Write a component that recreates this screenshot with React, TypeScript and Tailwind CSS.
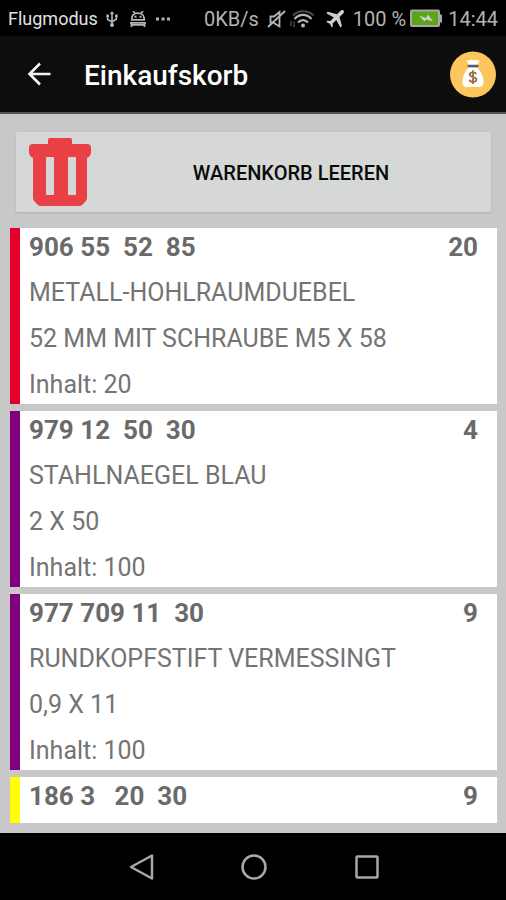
/* Shopping basket screen: status bar, app bar, list of articles, nav keys. */
import { useState } from "react";

interface Item { nr: string; qty: number; lines: string[]; bar: string }

const START: Item[] = [
  { nr: "906 55  52  85", qty: 20, bar: "bg-[#e4002b]",
    lines: ["METALL-HOHLRAUMDUEBEL", "52 MM MIT SCHRAUBE M5 X 58", "Inhalt: 20"] },
  { nr: "979 12  50  30", qty: 4, bar: "bg-[#800080]",
    lines: ["STAHLNAEGEL BLAU", "2 X 50", "Inhalt: 100"] },
  { nr: "977 709 11  30", qty: 9, bar: "bg-[#800080]",
    lines: ["RUNDKOPFSTIFT VERMESSINGT", "0,9 X 11", "Inhalt: 100"] },
  { nr: "186 3   20  30", qty: 9, bar: "bg-[#ffff00]", lines: [] },
];

function StatusBar() {
  return (
    <div className="flex h-9 shrink-0 items-center justify-between bg-black px-2 pt-0.5 text-[#b4b4b4]">
      <div className="flex items-center">
        <span className="text-lg text-[#e0e0e0]">Flugmodus</span>
        <svg className="ml-2 h-4 w-3" viewBox="0 0 12 16" fill="none" stroke="currentColor" strokeWidth="1.6">
          <path d="M6 2v12M1.600 5v3.500L6 11l4.400-3V5" />
          <path d="M6 0l2.200 3H3.800zM.3 3.500h2.600v2.400H.3zM9.100 3.500h2.600v2.400H9.100z" fill="currentColor" stroke="none" />
          <circle cx="6" cy="14" r="2" fill="currentColor" stroke="none" />
        </svg>
        <svg className="ml-3 h-4 w-4" viewBox="0 0 16 16" fill="none" stroke="currentColor" strokeWidth="1.8">
          <path d="M3 0l2 2.500M13 0l-2 2.500M1.800 8C1.800 4 4.500 2.200 8 2.200S14.200 4 14.200 8v.8H1.800z" />
          <path d="M0 11.800h16M1.500 12v4M14.500 12v4M2 13.800h12" />
          <path d="M4.500 4.800h2v2h-2zM9.500 4.800h2v2h-2z" fill="currentColor" stroke="none" />
        </svg>
        <svg className="ml-2.5 h-1 w-4" viewBox="0 0 16 4" fill="currentColor">
          <path d="M0 .5h3v3H0zM5.500 .5h3v3h-3zM11 .5h3v3h-3z" />
        </svg>
      </div>
      <div className="flex items-center text-xl">
        <span>0KB/s</span>
        <svg className="ml-2 h-5 w-5" viewBox="0 0 20 20" fill="none" stroke="currentColor" strokeWidth="1.8">
          <path d="M3.500 7.500v6H6l6.500 4V3L7 7.500z" />
          <path d="M1 18L18 2" />
        </svg>
        <svg className="ml-0.5 h-5 w-7" viewBox="0 0 28 20" fill="none" stroke="currentColor" strokeWidth="2.200">
          <path d="M4 6.500C9 .8 19 .8 24.500 6.500" stroke="#4a4a4a" />
          <path d="M5.500 10c5-5.500 12-5.500 17 0M9 13.500c3-3.300 7-3.300 10 0" />
          <circle cx="14" cy="16.500" r="2" fill="currentColor" stroke="none" />
          <path d="M2 12v5M5 12.500v5.500" stroke="#4a4a4a" strokeWidth="1.500" />
        </svg>
        <svg className="ml-2 h-5 w-5" viewBox="0 0 20 20" fill="#cfcfcf">
          <path d="M18.500 1.500c-.9-.9-2.300-.5-3.200.4L12 5.200 2.800 2.800 1.300 4.300l7.500 4.100-3.500 3.700-2.800-.4-1.200 1.200 3.600 1.900 1.900 3.600 1.200-1.200-.4-2.800 3.700-3.500 4.100 7.500 1.500-1.500L14.500 8l3.500-3.300c.9-.9 1.400-2.300.5-3.200z" />
        </svg>
        <span className="ml-2">100 %</span>
        <svg className="ml-1 h-5 w-8" viewBox="0 0 32 20">
          <rect x="1" y="1.500" width="28" height="15.500" rx="1" fill="#5ca516" stroke="#a8a8a8" strokeWidth="2" />
          <path d="M30 5.500h2v8h-2z" fill="#a8a8a8" />
          <path d="M9 6.500l7 2.500 2-3.500 5 7-7-2-1.500 2z" fill="#d0d0d0" />
        </svg>
        <span className="ml-1.5">14:44</span>
      </div>
    </div>
  );
}

function MoneyBag() {
  return (
    <svg className="h-12 w-12" viewBox="0 0 48 48">
      <circle cx="24" cy="24.500" r="23" fill="#fdc55e" />
      <path d="M17.500 10c2 1.200 3 .2 4.500-.5 1.500 1 3 1.200 4.500.2 1.200.8 2.500.8 4 .3L28.500 15.500h-9z" fill="#fff" />
      <path d="M19.500 17.500h9c3 4 6 8.500 6 14 0 4-1.500 5.500-4 5.500h-13c-2.500 0-4-1.500-4-5.500 0-5.500 3-10 6-14z" fill="#fff" />
      <rect x="18.500" y="14.800" width="11" height="2.500" rx="1" fill="#4f5d73" />
      <path d="M27.200 24c-.4-1.200-1.700-1.700-3.200-1.700-1.800 0-3.200.8-3.200 2.300 0 3.300 6.600 1.600 6.600 4.900 0 1.600-1.500 2.400-3.400 2.400-1.700 0-3.200-.7-3.500-2.200M24 20.300v13.600" fill="none" stroke="#a0703a" strokeWidth="1.800" />
    </svg>
  );
}

function TrashIcon() {
  return (
    <svg className="h-[68px] w-[62px] shrink-0" viewBox="0 0 62 68" fill="#e84045">
      <path fillRule="evenodd" d="M22 0h19q2 0 2 2v4h15q4 0 4 4v4q0 4-4 6v40q0 2-2 4l-3 3q-1 1-3 1H12q-2 0-3-1l-3-3q-2-2-2-4V20q-4-2-4-6v-4q0-4 4-4h15V2q0-2 2-2zM18 19q-1 0-1 1v36q0 1 1 1h6q1 0 1-1V20q0-1-1-1zM40 19q-1 0-1 1v36q0 1 1 1h6q1 0 1-1V20q0-1-1-1z" />
    </svg>
  );
}

function Row({ item }: { item: Item }) {
  return (
    <li className="flex min-h-[46px] shrink-0 bg-white">
      <div className={`w-[10px] shrink-0 ${item.bar}`} />
      <div className="flex flex-1 flex-col gap-2 pr-[19px] pl-[9px] text-[25px] leading-[38px] text-[#747474]">
        <div className="flex justify-between text-[26px] leading-[38px] font-bold text-[#6a6a6a]">
          <span className="whitespace-pre">{item.nr}</span>
          <span>{item.qty}</span>
        </div>
        {item.lines.map((l) => <p key={l}>{l}</p>)}
      </div>
    </li>
  );
}

export default function App() {
  const [items, setItems] = useState(START);

  return (
    <div className="flex h-screen flex-col bg-[#c8c8c8] font-['Roboto',sans-serif]">
      <StatusBar />
      <header className="flex h-[78px] shrink-0 items-center border-b-2 border-[#555] bg-[#0d0d0d] pr-[9px] pl-6 text-white">
        <button aria-label="Zurück">
          <svg className="h-8 w-8" viewBox="0 0 32 32" fill="none" stroke="#f4f4f4" strokeWidth="2.600">
            <path d="M26.500 16H5.500M16 5.500L5.500 16 16 26.500" />
          </svg>
        </button>
        <h1 className="ml-7 flex-1 pt-1 text-[28px] font-medium">Einkaufskorb</h1>
        <button aria-label="Bestellen"><MoneyBag /></button>
      </header>

      <main className="flex min-h-0 flex-1 flex-col pt-[18px] pr-[9px] pb-[10px] pl-[10px]">
        <button
          onClick={() => setItems([])}
          className="mx-[6px] mb-4 flex h-20 shrink-0 items-center rounded-xs bg-[#d6d8d7] pl-[13px]
                     text-xl font-medium text-[#0a0a0a] shadow-sm">
          <TrashIcon />
          <span className="flex-1 pt-0.5 text-center">WARENKORB LEEREN</span>
        </button>
        <ul className="flex min-h-0 flex-1 flex-col gap-[7px] overflow-y-auto [scrollbar-width:none]">
          {items.map((it) => <Row key={it.nr} item={it} />)}
        </ul>
      </main>

      <nav className="flex h-[67px] shrink-0 items-center justify-center gap-20 bg-black">
        <button aria-label="Zurück">
          <svg className="h-8 w-8" viewBox="0 0 32 32" fill="none" stroke="#a8a8a8" strokeWidth="2.500">
            <path d="M27 4.500v23L6 16z" strokeLinejoin="round" />
          </svg>
        </button>
        <button aria-label="Start">
          <svg className="h-8 w-8" viewBox="0 0 32 32" fill="none" stroke="#a8a8a8" strokeWidth="2.500">
            <circle cx="17" cy="16" r="11.500" />
          </svg>
        </button>
        <button aria-label="Übersicht">
          <svg className="h-8 w-8" viewBox="0 0 32 32" fill="none" stroke="#a8a8a8" strokeWidth="2.500">
            <rect x="7.500" y="5.500" width="21" height="21" rx="1" />
          </svg>
        </button>
      </nav>
    </div>
  );
}
